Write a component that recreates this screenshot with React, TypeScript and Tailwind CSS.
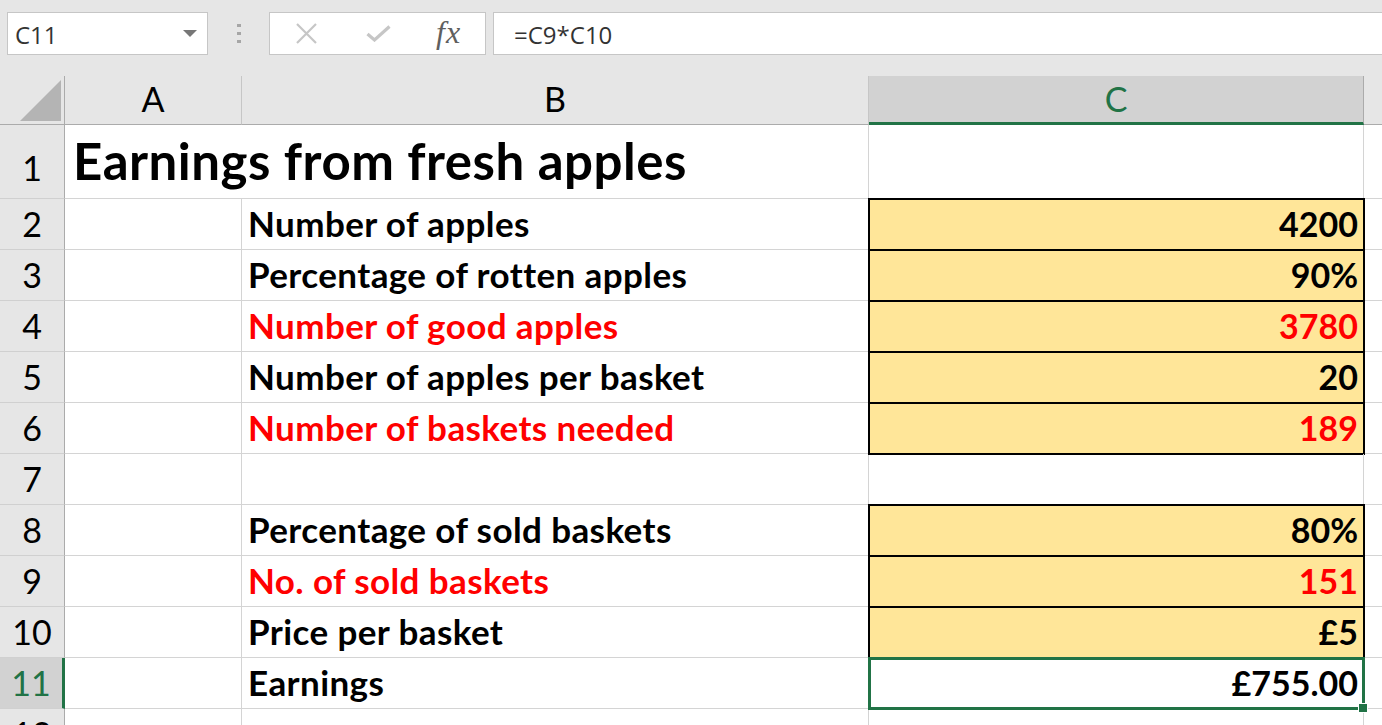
import React from "react";

type Row = {
  n: number;
  h: string;
  label?: string;
  value?: string;
  red?: boolean;
  yellow?: boolean;
  title?: boolean;
  selected?: boolean;
};

const rows: Row[] = [
  { n: 1, h: "h-[74px]", title: true, label: "Earnings from fresh apples" },
  { n: 2, h: "h-[51px]", label: "Number of apples", value: "4200", yellow: true },
  { n: 3, h: "h-[51px]", label: "Percentage of rotten apples", value: "90%", yellow: true },
  { n: 4, h: "h-[51px]", label: "Number of good apples", value: "3780", yellow: true, red: true },
  { n: 5, h: "h-[51px]", label: "Number of apples per basket", value: "20", yellow: true },
  { n: 6, h: "h-[51px]", label: "Number of baskets needed", value: "189", yellow: true, red: true },
  { n: 7, h: "h-[51px]" },
  { n: 8, h: "h-[51px]", label: "Percentage of sold baskets", value: "80%", yellow: true },
  { n: 9, h: "h-[51px]", label: "No. of sold baskets", value: "151", yellow: true, red: true },
  { n: 10, h: "h-[51px]", label: "Price per basket", value: "£5", yellow: true },
  { n: 11, h: "h-[51px]", label: "Earnings", value: "£755.00", selected: true },
  { n: 12, h: "h-[51px]" },
];

function SheetRow({ r }: { r: Row }) {
  const color = r.red ? "text-[#ff0000]" : "text-black";
  return (
    <div className={`flex ${r.h}`}>
      <div
        className={`w-[65px] shrink-0 flex items-end justify-center border-b border-[#d0d0d0] text-[34px] leading-none font-normal ${
          r.selected
            ? "bg-[#d2d2d2] text-[#217346] border-r-[3px] border-r-[#217346]"
            : "bg-[#e6e6e6] text-black border-r border-r-[#ababab]"
        } ${r.title ? "pb-[13px]" : "pb-[8px]"}`}
      >
        {r.n}
      </div>
      {r.title ? (
        <div className="w-[804px] shrink-0 flex items-end border-b border-r border-[#d4d4d4] pl-[8px] pb-[12px] text-[51px] tracking-[0.5px] leading-none font-bold whitespace-nowrap">
          {r.label}
        </div>
      ) : (
        <>
          <div className="w-[177px] shrink-0 border-b border-r border-[#d4d4d4]" />
          <div
            className={`w-[627px] shrink-0 flex items-end border-b border-r border-[#d4d4d4] pl-[6px] pb-[8px] text-[35px] tracking-[0.4px] leading-none font-bold whitespace-nowrap ${color}`}
          >
            {r.label}
          </div>
        </>
      )}
      <div
        className={`relative w-[495px] shrink-0 flex items-end justify-end border-b border-r border-[#d4d4d4] pr-[5px] pb-[8px] text-[34px] leading-none font-bold whitespace-nowrap ${color} ${
          r.yellow ? "bg-[#ffe699] outline-2 outline-black -outline-offset-1" : ""
        } ${r.selected ? "outline-[3px] outline-[#217346] -outline-offset-2" : ""}`}
      >
        {r.value}
        {r.selected && (
          <div className="absolute right-[-5px] bottom-[-5px] w-[10px] h-[10px] bg-[#217346] border border-white z-10" />
        )}
      </div>
      <div className="flex-1 border-b border-[#d4d4d4]" />
    </div>
  );
}

export default function App() {
  return (
    <div className="w-[1382px] h-[725px] overflow-hidden bg-white font-['Lato',sans-serif] text-black">
      {/* formula bar */}
      <div className="h-[76px] bg-[#e6e6e6] flex items-start pt-[12px] pl-[7px]">
        <div className="w-[201px] h-[43px] shrink-0 bg-white border border-[#c6c6c6] flex items-center justify-between pl-[7px] pr-[10px] font-['Open_Sans',sans-serif] text-[24px] text-[#333] leading-none">
          <span className="pt-[3px]">C11</span>
          <svg width="14" height="7" viewBox="0 0 14 7">
            <polygon points="0,0 14,0 7,7" fill="#777" />
          </svg>
        </div>
        <div className="ml-[29px] mt-[12px] flex flex-col gap-[5px] shrink-0">
          <div className="w-[4px] h-[3px] bg-[#a6a6a6]" />
          <div className="w-[4px] h-[3px] bg-[#a6a6a6]" />
          <div className="w-[4px] h-[3px] bg-[#a6a6a6]" />
        </div>
        <div className="ml-[28px] w-[217px] h-[43px] shrink-0 bg-white border border-[#c6c6c6] flex items-center">
          <svg className="ml-[26px]" width="21" height="21" viewBox="0 0 21 21">
            <path d="M1 1 L20 20 M20 1 L1 20" stroke="#c6c6c6" strokeWidth="2.2" fill="none" />
          </svg>
          <svg className="ml-[49px]" width="25" height="17" viewBox="0 0 25 17">
            <path d="M1.5 9 L8.5 15 L23.5 1.5" stroke="#c6c6c6" strokeWidth="3.2" fill="none" />
          </svg>
          <span className="ml-[45px] pb-[3px] font-['Liberation_Serif',serif] italic text-[32px] leading-none text-[#5f5f5f] tracking-[1px]">
            fx
          </span>
        </div>
        <div className="ml-[7px] flex-1 h-[43px] bg-white border border-r-0 border-[#c6c6c6] flex items-center pl-[20px] font-['Open_Sans',sans-serif] text-[24px] text-[#333] leading-none">
          <span className="pt-[3px]">=C9*C10</span>
        </div>
      </div>

      {/* column headers */}
      <div className="flex h-[49px] bg-[#e6e6e6]">
        <div className="w-[65px] shrink-0 border-r border-b border-[#ababab] flex items-end justify-end pr-[3px] pb-[3px]">
          <svg width="41" height="41" viewBox="0 0 41 41">
            <polygon points="0,41 41,41 41,0" fill="#b4b4b4" />
          </svg>
        </div>
        <div className="w-[177px] shrink-0 border-b border-b-[#ababab] border-r border-r-[#c6c6c6] flex items-end justify-center pb-[8px] text-[34px] leading-none">
          A
        </div>
        <div className="w-[627px] shrink-0 border-b border-b-[#ababab] border-r border-r-[#c6c6c6] flex items-end justify-center pb-[8px] text-[34px] leading-none">
          B
        </div>
        <div className="w-[495px] shrink-0 bg-[#d2d2d2] border-b-[3px] border-b-[#217346] border-r border-r-[#ababab] flex items-end justify-center pb-[6px] text-[34px] leading-none text-[#217346]">
          C
        </div>
        <div className="flex-1 border-b border-[#ababab]" />
      </div>

      {rows.map((r) => (
        <SheetRow key={r.n} r={r} />
      ))}
    </div>
  );
}
